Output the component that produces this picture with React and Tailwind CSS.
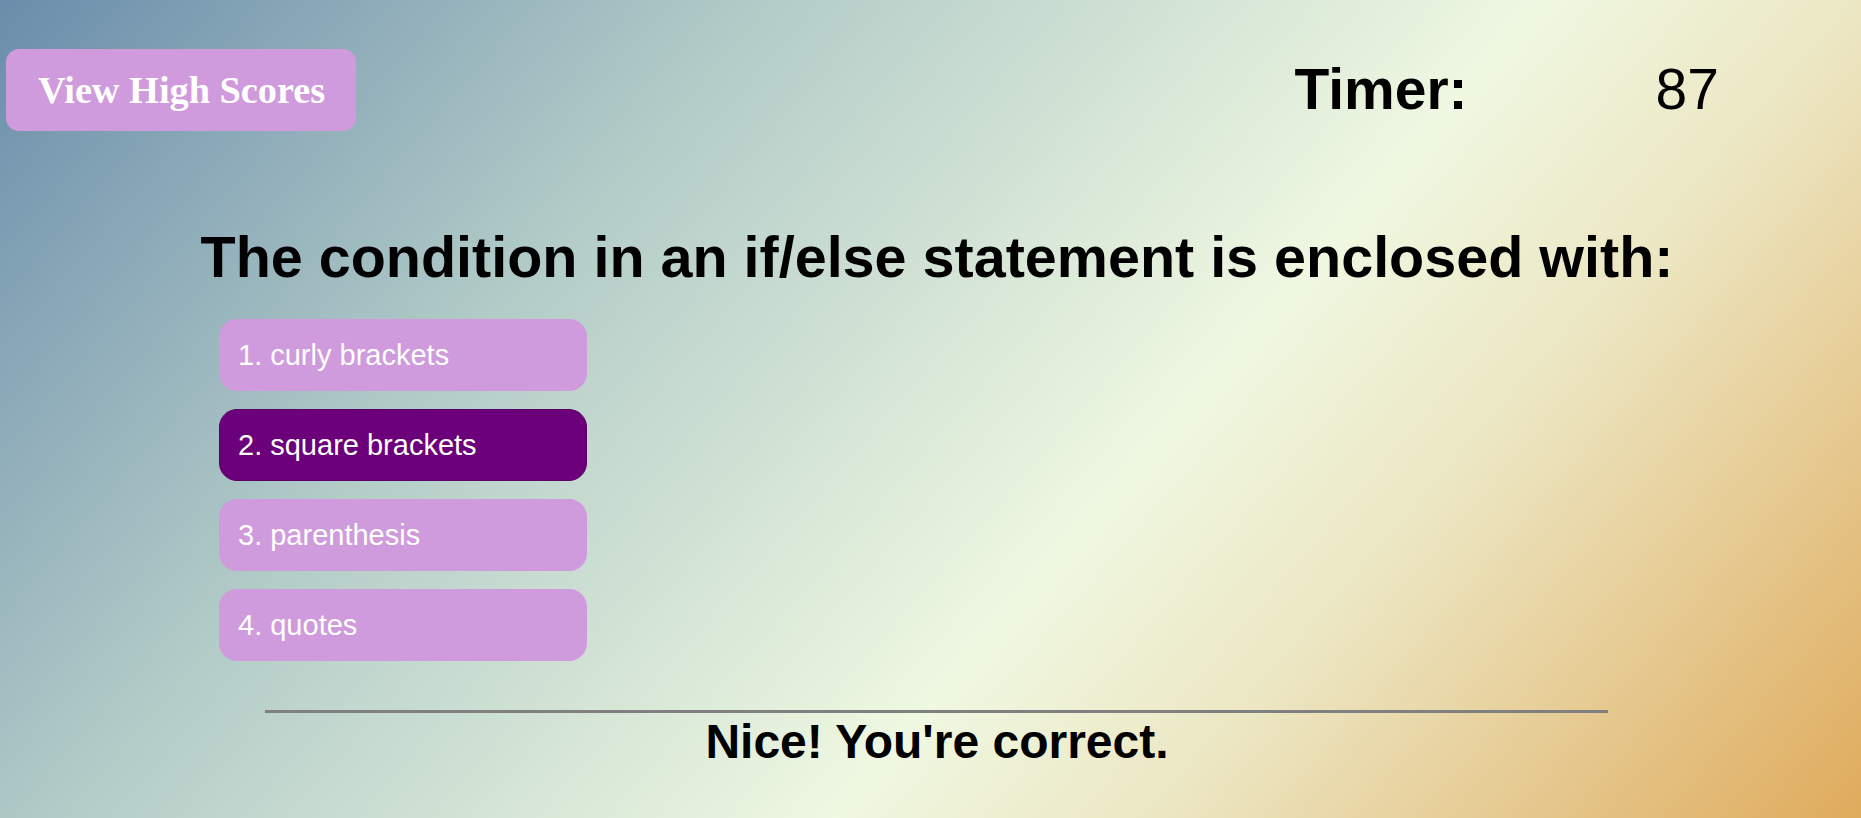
export default function App() {
  const answers = ["1. curly brackets", "2. square brackets", "3. parenthesis", "4. quotes"];
  return (
    <div
      className="w-[1861px] h-[818px] overflow-hidden text-black"
      style={{
        fontFamily: '"Liberation Sans", Arial, sans-serif',
        background:
          "linear-gradient(131deg, #6a8dab 0%, #b3ccc8 30%, #eff8e1 60%, #ece6c2 73%, #dfab5c 100%)",
      }}
    >
      <div className="flex items-start justify-between pt-[49px] pl-[6px] pr-[142px]">
        <button
          className="w-[350px] h-[82px] rounded-[13px] bg-[#cf9bdc] text-white text-left pl-[32px] text-[38.3px] font-bold leading-none"
          style={{ fontFamily: '"Liberation Serif", "Times New Roman", serif' }}
        >
          View High Scores
        </button>
        <div className="flex gap-[188px] pt-[8px] text-[57px] leading-[65px]">
          <span className="font-bold">Timer:</span>
          <span>87</span>
        </div>
      </div>

      <div className="pl-[13px] mt-[94px] text-center">
        <h1 className="text-[57.5px] leading-[65px] font-bold">
          The condition in an if/else statement is enclosed with:
        </h1>
      </div>

      <div className="flex flex-col gap-[18px] ml-[219px] mt-[29px]">
        {answers.map((a, i) => (
          <button
            key={a}
            className={
              i === 1
                ? "w-[368px] h-[72px] rounded-[18px] bg-[#6c007a] border border-[#5a0066] text-white text-left pl-[18px] text-[29px] leading-none"
                : "w-[368px] h-[72px] rounded-[18px] bg-[#cf9bdc] text-white text-left pl-[19px] text-[29px] leading-none"
            }
          >
            {a}
          </button>
        ))}
      </div>

      <div className="ml-[265px] w-[1343px] h-[3px] bg-[#808080] mt-[49px]" />
      <div className="pl-[13px] pt-[1px] text-center text-[48px] leading-[55px] font-bold">
        Nice! You're correct.
      </div>
    </div>
  );
}
